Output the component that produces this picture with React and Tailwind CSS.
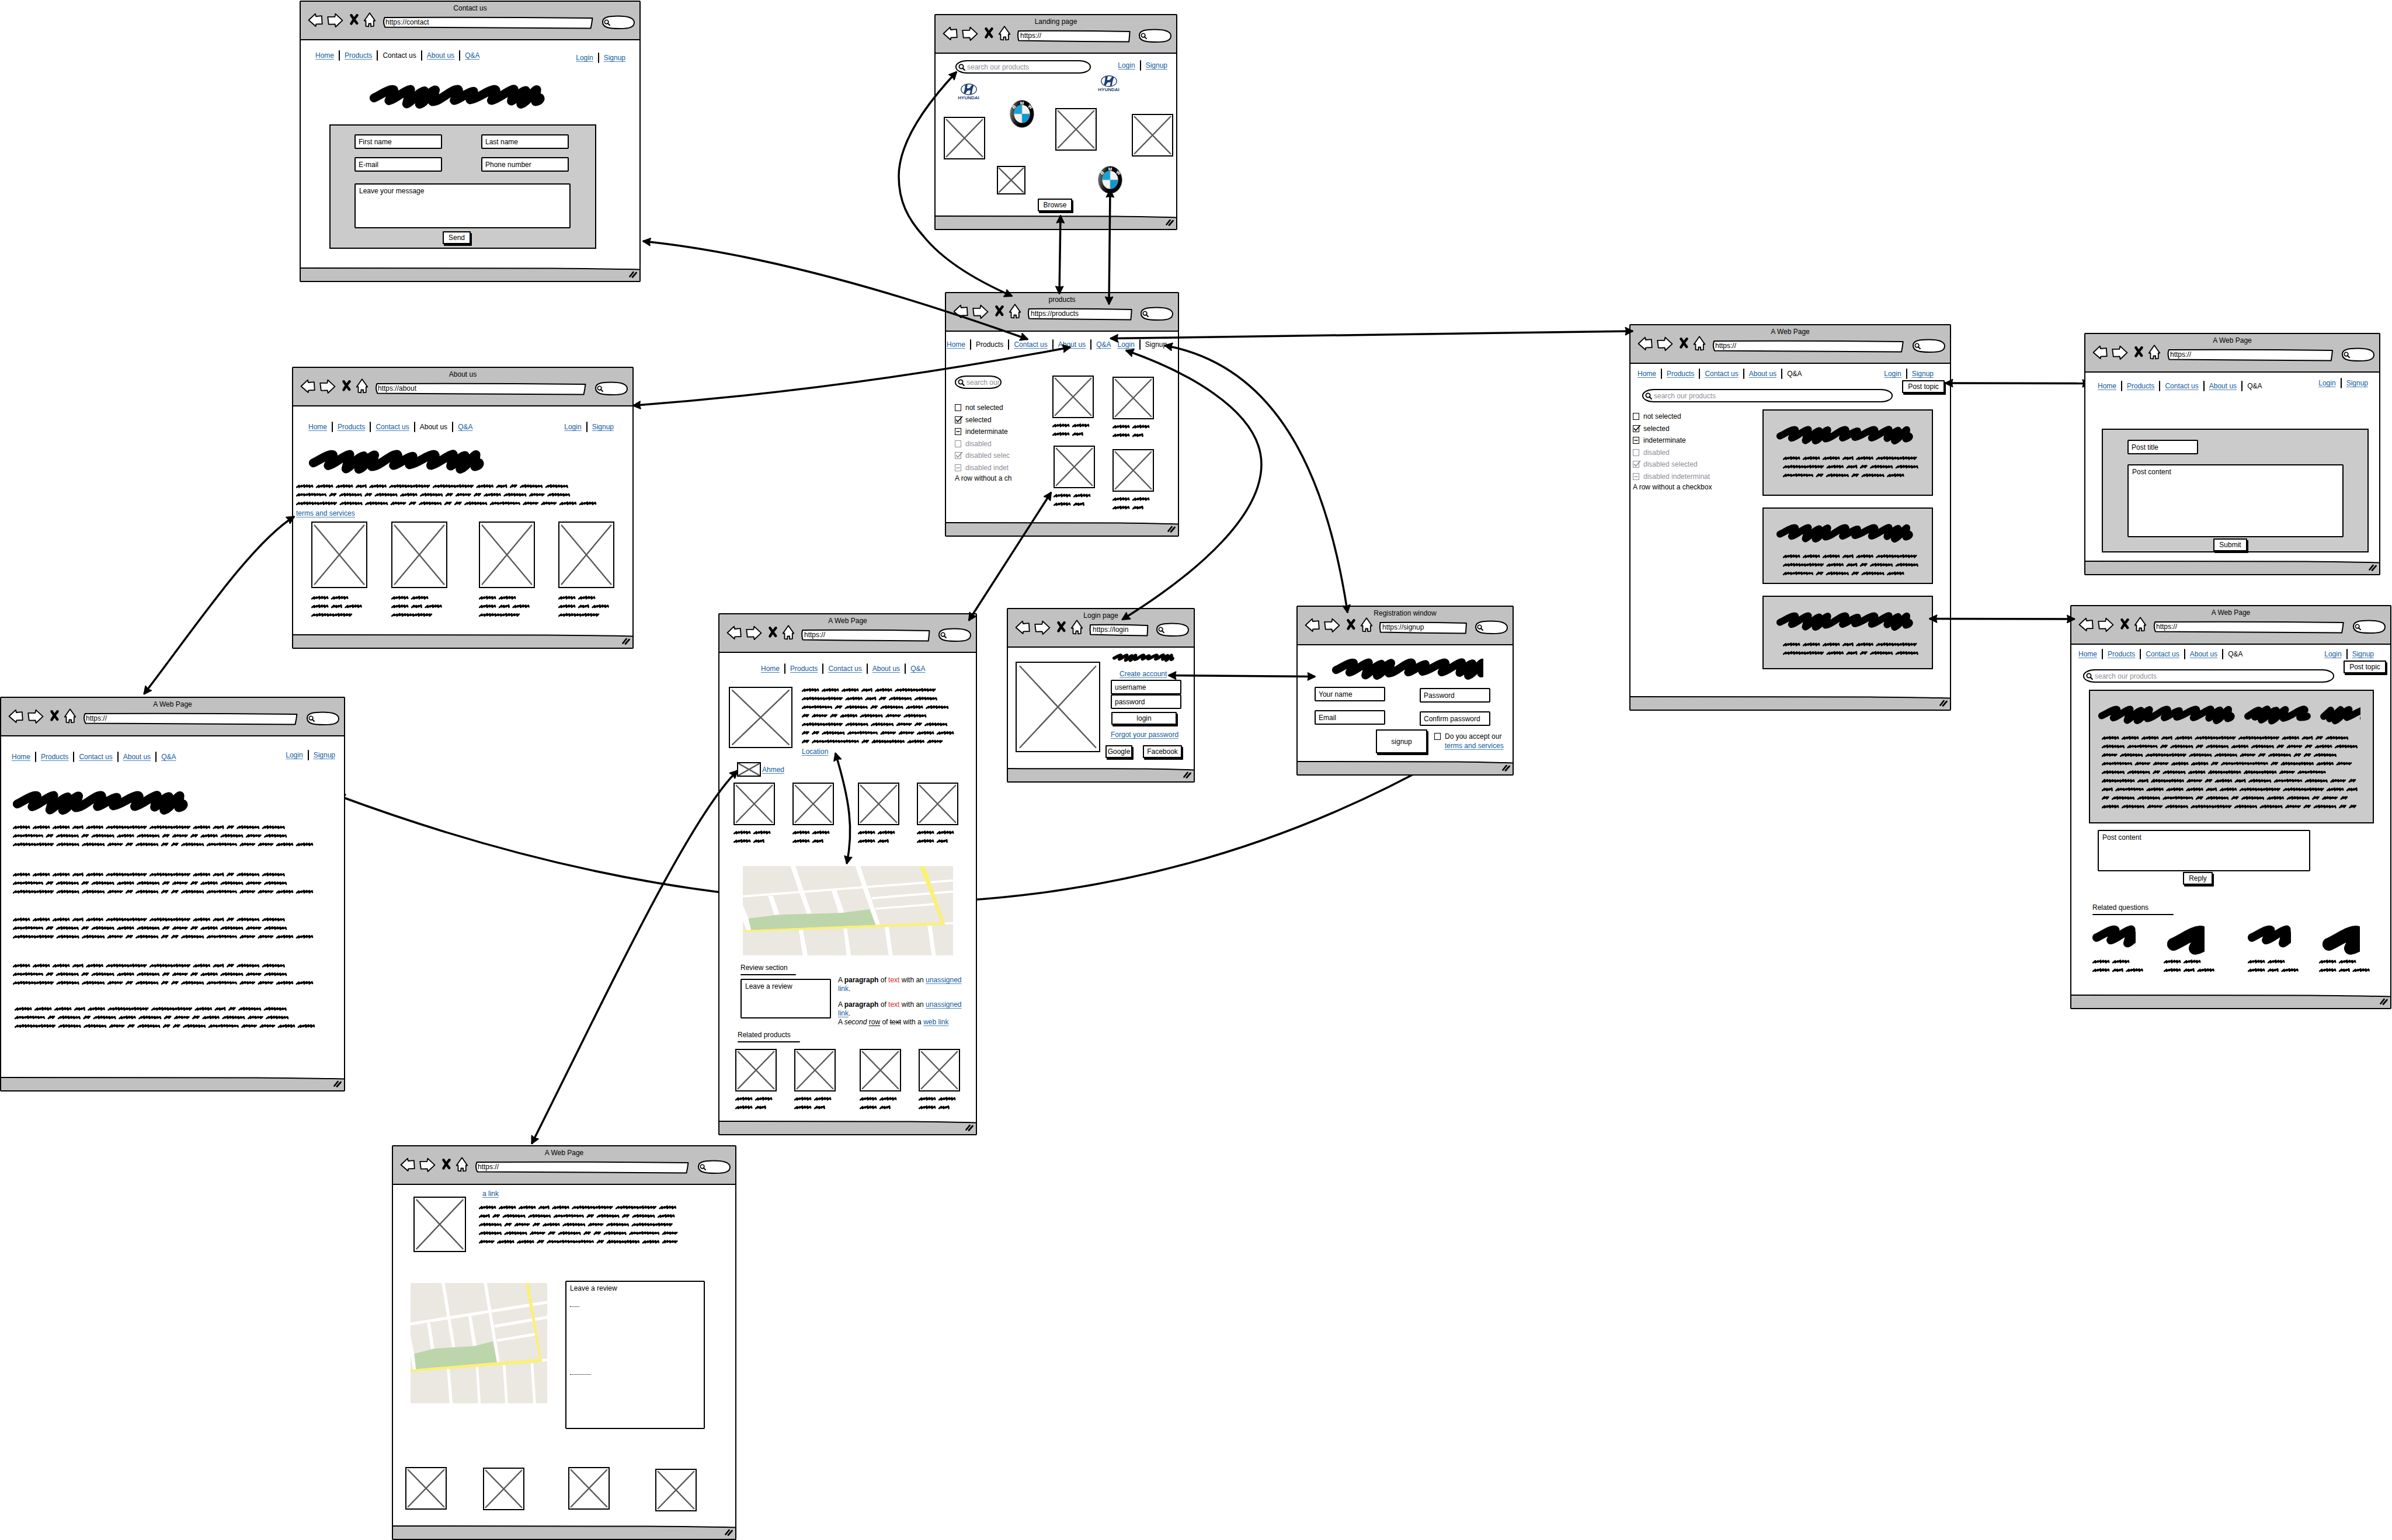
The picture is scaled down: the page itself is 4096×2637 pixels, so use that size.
import React from "react";

/* ---------- sketch drawing helpers ---------- */

const WORD_WIDTH = { 2: 12.6, 3: 18.8, 4: 26.6, 5: 29.4, 7: 39, 8: 48.4, 9: 56.4, T: 52, C: 70, R: 80.6 };
const WORD_GAP = 4.6;
const LINE = 14.7;

function wordPath(kind, x0, yc) {
  const w = WORD_WIDTH[kind];
  const steps = Math.round(w / 2.4);
  const seed = kind.charCodeAt(0);
  let d = "M" + (x0 + 1.2).toFixed(1) + " " + (yc + 2).toFixed(1);
  for (let i = 1; i <= steps; i++) {
    const x = x0 + 1.2 + ((w - 2.4) * i) / steps;
    const r = ((seed * 31 + i * 17) % 7) / 7;
    const y = i % 2 ? yc - 0.9 - r * 1.1 : yc + 0.8 + (((seed + i * 5) % 4) / 4) * 1.5;
    const shift = i === steps ? 0 : i % 2 ? 1.5 : -0.8;
    d += "L" + (x + shift).toFixed(1) + " " + y.toFixed(1);
  }
  return d;
}

function Scribble({ rows, className = "" }) {
  let d = "";
  let width = 0;
  rows.forEach((row, r) => {
    let x = 0;
    row.split(" ").forEach((k) => {
      d += wordPath(k, x, r * LINE + LINE / 2);
      x += WORD_WIDTH[k] + WORD_GAP;
    });
    width = Math.max(width, x);
  });
  return (
    <svg
      aria-hidden="true"
      width={Math.ceil(width)}
      height={Math.ceil(rows.length * LINE)}
      className={"block shrink-0 " + className}
    >
      <path d={d} fill="none" stroke="#000" strokeWidth="2.7" strokeLinejoin="round" strokeLinecap="round" />
    </svg>
  );
}

const HEADING_LONG =
  "M7.5 22.6C18 18 30 9 38 8.4C44 7.8 41 11 38 17L33 27.3C45 25 58 10 70 8.2L63.4 32.8C72 30 82 13 94 10.7L85.3 33.4C98 30 100 12 112.5 9L107.6 29C122 28 138 9 150 8.2C156 8 149 18 144.8 27C155 25 168 12 178 11.3L172 25.8C188 23 202 9 214 8.2C220 9 212 18 208.6 27C222 24 236 10 247 7.8L242.7 28C252 24 257 12 267.3 10L259 33.4C272 29 276 14 286 8.5L284 29C290 28 293 25 291.6 22.6";
const HEADING_MID =
  "M5.9 18.6C12 15 20 8 25 7.8L18 20C26 18 34 7 39.5 6.2L29 25C40 20 46 9 55 8.2L46.7 26.6C58 22 64 8 70.5 6.8L66.7 22C80 20 92 7 102 6.2C108 7 98 14 95 20.5C101 21 106 20 108 18.3";
const HEADING_CUT = "M6 18.8L18 8L16 22.8L35 7L25.5 26.4C36 22 42 8 49.5 6.8L45.6 20.5C54 18 66 9 78 6L74 22";

function Blob({ viewBox, d = HEADING_LONG, stroke = "15.2", className = "" }) {
  return (
    <svg aria-hidden="true" viewBox={viewBox} preserveAspectRatio="xMinYMin meet" className={"block shrink-0 " + className}>
      <path d={d} fill="none" stroke="#000" strokeWidth={stroke} strokeLinejoin="round" strokeLinecap="round" />
    </svg>
  );
}

function Picture({ className = "" }) {
  return (
    <svg aria-hidden="true" viewBox="0 0 100 100" preserveAspectRatio="none" className={"block shrink-0 border-2 border-black bg-white " + className}>
      <g stroke="#595959" strokeWidth="2.4" strokeLinecap="round">
        <line x1="4" y1="4" x2="96" y2="96" vectorEffect="non-scaling-stroke" />
        <line x1="96" y1="4" x2="4" y2="96" vectorEffect="non-scaling-stroke" />
      </g>
    </svg>
  );
}

function StreetMap({ className = "" }) {
  return (
    <svg aria-hidden="true" viewBox="0 0 1161 492" preserveAspectRatio="none" className={"block shrink-0 bg-[#ebe8e1] " + className}>
      <g fill="#fff">
        <path d="M263 0H291L379 262H353Z" />
        <path d="M621 0H649L758 324H733Z" />
        <path d="M0 161L1161 73V85L0 173Z" />
        <path d="M711 171L1161 134V146L714 183Z" />
        <path d="M731 230L1080 202V214L735 240Z" />
        <path d="M139 163H167L203 269H173Z" />
        <path d="M489 134H517L561 257H529Z" />
        <path d="M0 214L31 289L46 352L22 356L0 298Z" />
        <path d="M1110 311L1161 309V320L1110 322Z" />
        <path d="M309 350H332L358 492H331Z" />
        <path d="M556 343H575L597 492H573Z" />
        <path d="M783 335H806L828 492H805Z" />
        <path d="M1020 328H1043L1066 492H1043Z" />
      </g>
      <path fill="#bdd5ab" d="M31 289L201 268L541 258L701 238L734 324L46 352Z" />
      <path fill="#fbf076" d="M0 354L1095 309L976 0H1006L1118 323L0 363Z" />
    </svg>
  );
}

function Magnifier({ className = "" }) {
  return (
    <svg aria-hidden="true" viewBox="0 0 12 12" className={"pointer-events-none " + className}>
      <circle cx="5" cy="5" r="3.6" fill="none" stroke="#000" strokeWidth="1.8" />
      <path d="M7.6 7.8L10.8 11" stroke="#000" strokeWidth="2.2" strokeLinecap="round" />
    </svg>
  );
}

/* ---------- browser frame ---------- */

function ToolButton({ label, viewBox, className, children }) {
  return (
    <button type="button" aria-label={label} className="flex h-[26px] items-center">
      <svg viewBox={viewBox} className={className} fill="#fff" stroke="#000" strokeWidth="6" strokeLinejoin="round" strokeLinecap="round">
        {children}
      </svg>
    </button>
  );
}

function Browser({ title, url = "https://", className = "", children }) {
  return (
    <section className={"absolute flex flex-col rounded-[2px] border-2 border-black bg-white " + className}>
      <header className="h-[66px] border-b-2 border-black bg-[#c1c1c1] pt-[3px]">
        <h2 className="h-[15px] text-center text-xs">{title}</h2>
        <div className="flex items-start pr-2 pl-3">
          <ToolButton label="Back" viewBox="76 91 84 80" className="h-[25px] w-[26px]">
            <path d="M81 131L118 96L121 110L153 107L156 152L122 153L120 165Z" />
          </ToolButton>
          <span className="w-[7px]" />
          <ToolButton label="Forward" viewBox="184 91 90 80" className="h-[25px] w-[28px]">
            <path d="M188 113L227 113L230 96L269 132L231 168L228 153L193 154Z" />
          </ToolButton>
          <span className="w-[10px]" />
          <ToolButton label="Stop" viewBox="306 98 54 64" className="h-[20px] w-[17px]">
            <path d="M317 105Q332 128 348 149M349 105Q330 126 317 151" fill="none" strokeWidth="14" />
          </ToolButton>
          <span className="w-[7px]" />
          <ToolButton label="Home page" viewBox="382 90 70 84" className="h-[26px] w-[22px]">
            <path d="M417 94L447 137L439 137L439 167L424 169L424 153L412 153L411 169L396 167L396 137L387 137Z" />
          </ToolButton>
          <div className="relative mt-2 ml-[11px] h-5 min-w-0 flex-1">
            <svg aria-hidden="true" viewBox="0 0 100 20" preserveAspectRatio="none" className="absolute inset-0 h-full w-full overflow-visible">
              <path
                d="M1 1Q50 0 99.3 2Q99 12 98.5 19.5Q50 19 1.2 17.5Q0 9 1 1Z"
                fill="#fff"
                stroke="#000"
                strokeWidth="2"
                strokeLinejoin="round"
                vectorEffect="non-scaling-stroke"
              />
            </svg>
            <input aria-label={title + " address"} defaultValue={url} className="relative block h-[18px] w-full bg-transparent pl-[5px] text-xs outline-none" />
          </div>
          <div className="relative mt-[6px] ml-[14px] h-[22px] w-[56px]">
            <svg aria-hidden="true" viewBox="0 0 56 22" className="absolute inset-0 h-full w-full overflow-visible">
              <path
                d="M1 10C1.5 2 12 0.5 27 0.5C45 0.5 54.5 3.5 55 11C55.3 20 46 22 30 22C11 22 0.5 20 1 10Z"
                fill="#fff"
                stroke="#000"
                strokeWidth="2"
              />
            </svg>
            <Magnifier className="absolute top-[6px] left-[3px] h-[11px] w-[11px]" />
            <input aria-label={title + " search"} className="relative block h-full w-full bg-transparent pl-4 text-xs outline-none" />
          </div>
        </div>
      </header>
      <div className="min-h-0 flex-1">{children}</div>
      <footer className="relative flex h-[23px] items-center justify-end pr-1">
        <svg aria-hidden="true" viewBox="0 0 100 23" preserveAspectRatio="none" className="absolute inset-0 h-full w-full">
          <path d="M-1 1C30 2 55 0.5 75 1.5S95 3 101 3.5V25H-1Z" fill="#c1c1c1" stroke="#000" strokeWidth="2" vectorEffect="non-scaling-stroke" />
        </svg>
        <svg aria-hidden="true" viewBox="0 0 14 12" className="relative h-3 w-[14px]">
          <path d="M1.5 9.5L7.5 2M6 10.5L12.5 3" stroke="#000" strokeWidth="2.8" strokeLinecap="round" />
        </svg>
      </footer>
    </section>
  );
}

/* ---------- controls ---------- */

function Link({ children, className = "" }) {
  return (
    <a href="#" className={"text-[#125a9c] underline decoration-[#4a86bd] decoration-1 underline-offset-2 " + className}>
      {children}
    </a>
  );
}

function LinkBar({ items, current, className = "" }) {
  return (
    <nav className={"flex h-[18px] shrink-0 items-center text-xs whitespace-nowrap " + className}>
      {items.map((item, i) => (
        <React.Fragment key={item}>
          {i > 0 && <span className="mx-2 h-[18px] w-[2px] rounded-full bg-black" />}
          {item === current ? <span>{item}</span> : <Link>{item}</Link>}
        </React.Fragment>
      ))}
    </nav>
  );
}

const MAIN = ["Home", "Products", "Contact us", "About us", "Q&A"];
const USER = ["Login", "Signup"];

function TextBox({ label, type = "text", className = "" }) {
  return (
    <input
      type={type}
      aria-label={label}
      placeholder={label}
      className={"block h-[25px] shrink-0 rounded-[2px] border-2 border-black bg-white pl-[5px] text-xs outline-none placeholder:text-black placeholder:opacity-100 " + className}
    />
  );
}

function TextArea({ label, className = "" }) {
  return (
    <textarea
      aria-label={label}
      placeholder={label}
      className={"block shrink-0 resize-none rounded-[2px] border-2 border-black bg-white px-[6px] pt-[3px] text-xs outline-none placeholder:text-black placeholder:opacity-100 " + className}
    />
  );
}

function PushButton({ children, className = "" }) {
  return (
    <button
      type="button"
      className={"block h-[22px] shrink-0 rounded-[1px] border-2 border-black bg-white text-center text-xs whitespace-nowrap shadow-[2px_3px_0_#000] " + className}
    >
      {children}
    </button>
  );
}

function SearchBox({ text = "search our products", className = "" }) {
  return (
    <div className={"relative shrink-0 " + className}>
      <input
        type="text"
        aria-label={text}
        placeholder={text}
        className="block h-[23px] w-full rounded-[20px/11px] border-2 border-black bg-white pl-[18px] text-xs outline-none placeholder:text-[#8e8e98] placeholder:opacity-100"
      />
      <Magnifier className="absolute top-[6px] left-[5px] h-3 w-3" />
    </div>
  );
}

function Tick({ label, state, disabled = false }) {
  const ink = disabled ? "#8e8e98" : "#000";
  return (
    <label className={"flex items-center gap-[7px] " + (disabled ? "text-[#8e8e98]" : "text-black")}>
      <span className="relative block h-3 w-[11px] shrink-0">
        <input
          type="checkbox"
          disabled={disabled}
          defaultChecked={state === "on"}
          className={"block h-3 w-[11px] appearance-none border " + (disabled ? "border-[#8e8e98]" : "border-black")}
        />
        <svg aria-hidden="true" viewBox="0 0 11 12" className="pointer-events-none absolute inset-0 h-full w-full overflow-visible" fill="none" stroke={ink}>
          {state === "on" && <path d="M2 5.5L5 9L13 0" strokeWidth="1.7" />}
          {state === "mixed" && <path d="M2.5 6H8.5" strokeWidth="1.4" />}
        </svg>
      </span>
      {label}
    </label>
  );
}

function TickList({ labels, className = "" }) {
  return (
    <div className={"overflow-hidden text-xs whitespace-nowrap " + className}>
      <div className="grid h-[123px] grid-rows-6">
        <Tick label="not selected" />
        <Tick label="selected" state="on" />
        <Tick label="indeterminate" state="mixed" />
        <Tick label="disabled" disabled />
        <Tick label={labels[0]} state="on" disabled />
        <Tick label={labels[1]} state="mixed" disabled />
      </div>
      <p>{labels[2]}</p>
    </div>
  );
}

function ProductCard({ rows = ["5 5", "5 3"], className = "" }) {
  return (
    <div className={"w-[71px] shrink-0 " + className}>
      <Picture className="h-[73px] w-[71px]" />
      <Scribble rows={rows} className="mt-[5px]" />
    </div>
  );
}

function Hyundai({ className = "" }) {
  return (
    <div className={"flex h-[30px] w-[37px] flex-col items-center text-[#1f3f74] " + className}>
      <svg aria-hidden="true" viewBox="0 0 28 20" className="h-5 w-7 shrink-0">
        <ellipse cx="14" cy="10" rx="13.2" ry="9.2" fill="none" stroke="#1f3f74" strokeWidth="1.4" />
        <path d="M7.5 2.8L12 1.2C11.5 4 11 6.5 10.8 8C14 8.5 16 7.5 17 5.5L19.5 2L22.5 3.500C20.5 8 19.5 13 19 17.5L15.5 19C16 16 16.5 13.5 17 12C13.5 11.5 11.5 12 10.5 14L8 18L5 16.5C7 12 7.5 7 7.5 2.8Z" fill="#1f3f74" />
      </svg>
      <span className="text-[8px] leading-[10px] font-bold">HYUNDAI</span>
    </div>
  );
}

function Bmw({ id, className = "" }) {
  return (
    <svg aria-label="BMW" role="img" viewBox="0 0 42 48" className={"block h-12 w-[42px] shrink-0 " + className}>
      <defs>
        <linearGradient id={id} x1="0" y1="0.3" x2="1" y2="0.5">
          <stop offset="0" stopColor="#777" />
          <stop offset="0.3" stopColor="#222" />
          <stop offset="0.5" stopColor="#000" />
        </linearGradient>
      </defs>
      <ellipse cx="21" cy="24" rx="20.5" ry="23.5" fill={"url(#" + id + ")"} stroke="#8fa7b3" strokeWidth="0.8" />
      <ellipse cx="21" cy="24" rx="13.6" ry="15.4" fill="#f2f2f2" />
      <path d="M21 24H7.4A13.6 15.4 0 0 1 21 8.6Z" fill="#12a5dc" />
      <path d="M21 24H34.6A13.6 15.4 0 0 1 21 39.4Z" fill="#0d97d0" />
      <path d="M7.4 24H34.6M21 8.6V39.4" stroke="#9aa" strokeWidth="0.7" />
      <g fill="#fff" fontFamily="Liberation Sans, sans-serif" fontSize="8" fontWeight="700" textAnchor="middle">
        <text x="21" y="8">M</text>
        <text transform="translate(9 14) rotate(-38)">B</text>
        <text transform="translate(33.5 14) rotate(38)">W</text>
      </g>
    </svg>
  );
}

function SectionTitle({ children, rule, className = "" }) {
  return (
    <div className={className}>
      <h3 className="h-[19px] text-xs">{children}</h3>
      <div className={"h-[2px] rounded-full bg-black " + rule} />
    </div>
  );
}

/* ---------- screens ---------- */

const LOREM_3 = ["5 5 5 3 5 C C 5 3 2 7 7", "T 2 7 2 7 5 7 2 4 2 5 7 4 7", "C 7 7 4 2 7 2 2 7 T 4 4 5 5"];
const CARD_LOREM = ["5 5 5 3 5 C", "C 5 3 2 7 7", "T 2 7 2 7 5"];

function ContactPage() {
  return (
    <Browser title="Contact us" url="https://contact" className="top-[1px] left-[513px] min-h-[482px] w-[584px]">
      <div className="flex items-start justify-between pt-[17px] pr-6 pl-[25px]">
        <LinkBar items={MAIN} current="Contact us" />
        <LinkBar items={USER} className="mt-1" />
      </div>
      <Blob viewBox="0 0 300 42" className="mt-[37px] ml-[118px] h-[42px] w-[300px]" />
      <form className="mt-[26px] ml-[49px] w-[457px] border-2 border-black bg-[#cbcbcb] pt-[15px] pb-[6px] pl-[41px]">
        <div className="grid grid-cols-[150px_150px] gap-x-[67px] gap-y-[14px]">
          <TextBox label="First name" />
          <TextBox label="Last name" />
          <TextBox label="E-mail" type="email" />
          <TextBox label="Phone number" type="tel" />
        </div>
        <TextArea label="Leave your message" className="mt-[20px] h-[77px] w-[370px]" />
        <PushButton className="mt-[5px] ml-[151px] w-[48px]">Send</PushButton>
      </form>
    </Browser>
  );
}

function LandingPage() {
  return (
    <Browser title="Landing page" className="top-[24px] left-[1600px] min-h-[370px] w-[416px]">
      <div className="flex items-start justify-between pt-[11px] pr-[15px] pl-[34px]">
        <SearchBox className="w-[232px]" />
        <LinkBar items={USER} />
      </div>
      <div className="flex items-start pl-[14px]">
        <div className="flex w-[71px] flex-col">
          <Hyundai className="mt-[17px] mr-[10px] self-end" />
          <Picture className="mt-[27px] h-[73px] w-[71px]" />
        </div>
        <div className="ml-5 flex w-16 flex-col">
          <Bmw id="ring-a" className="mt-[45px] self-end" />
          <Picture className="mt-[65px] h-[49px] w-[49px]" />
        </div>
        <div className="ml-[6px] flex w-[101px] flex-col">
          <Picture className="mt-[59px] h-[73px] w-[71px] self-end" />
          <PushButton className="mt-[82px] w-[59px]">Browse</PushButton>
        </div>
        <div className="ml-[2px] flex w-[42px] flex-col">
          <Hyundai className="mt-[3px]" />
          <Bmw id="ring-b" className="mt-[125px]" />
        </div>
        <Picture className="mt-[69px] ml-4 h-[73px] w-[71px]" />
      </div>
    </Browser>
  );
}

function ProductsPage() {
  return (
    <Browser title="products" url="https://products" className="top-[500px] left-[1618px] min-h-[419px] w-[401px]">
      <div className="flex items-start gap-[11px] pt-[13px] pl-[1px]">
        <LinkBar items={MAIN} current="Products" />
        <LinkBar items={USER} current="Signup" />
      </div>
      <div className="mt-[44px] flex items-start pl-[15px]">
        <div className="w-[99px]">
          <SearchBox text="search our" className="w-20" />
          <TickList labels={["disabled selec", "disabled indet", "A row without a ch"]} className="mt-[22px]" />
        </div>
        <div className="ml-[68px]">
          <ProductCard />
          <ProductCard className="mt-[12px] ml-[2px]" />
        </div>
        <div className="mt-[2px] ml-[30px]">
          <ProductCard />
          <ProductCard className="mt-[16px]" />
        </div>
      </div>
    </Browser>
  );
}

function AboutPage() {
  const team = ["", "ml-[41px]", "ml-[54px]", "ml-[40px]"];
  return (
    <Browser title="About us" url="https://about" className="top-[628px] left-[500px] min-h-[483px] w-[585px]">
      <div className="flex items-start justify-between pt-[26px] pr-8 pl-[26px]">
        <LinkBar items={MAIN} current="About us" />
        <LinkBar items={USER} />
      </div>
      <Blob viewBox="0 0 300 42" className="mt-[30px] ml-[27px] h-[42px] w-[300px]" />
      <Scribble rows={LOREM_3} className="mt-[13px] ml-[5px]" />
      <p className="mt-px ml-[5px] text-xs">
        <Link>terms and services</Link>
      </p>
      <div className="mt-[6px] flex items-start pl-[31px]">
        {team.map((gap, i) => (
          <div key={i} className={"w-24 " + gap}>
            <Picture className="h-[114px] w-24" />
            <Scribble rows={["5 5", "5 3 5", "C"]} className="mt-[9px]" />
          </div>
        ))}
      </div>
    </Browser>
  );
}

function TermsPage() {
  const paragraphs = ["mt-[13px] ml-[20px]", "mt-[36px] ml-[20px]", "mt-[32px] ml-[20px]", "mt-[34px] ml-[20px]", "mt-[29px] ml-[23px]"];
  return (
    <Browser title="A Web Page" className="top-[1193px] left-0 min-h-[676px] w-[591px]">
      <div className="flex items-start justify-between pt-[23px] pr-[15px] pl-[18px]">
        <LinkBar items={MAIN} className="mt-[3px]" />
        <LinkBar items={USER} />
      </div>
      <Blob viewBox="0 0 300 42" className="mt-[49px] ml-[20px] h-[42px] w-[300px]" />
      {paragraphs.map((place) => (
        <Scribble key={place} rows={LOREM_3} className={place} />
      ))}
    </Browser>
  );
}

function ProductPage() {
  const gaps = ["", "ml-[30px]", "ml-[41px]", "ml-[30px]"];
  return (
    <Browser title="A Web Page" className="top-[1050px] left-[1230px] min-h-[894px] w-[443px]">
      <LinkBar items={MAIN} className="mt-[18px] ml-[71px]" />
      <div className="mt-5 flex items-start pl-4">
        <Picture className="mt-[2px] h-[105px] w-[109px]" />
        <div className="ml-4">
          <Scribble
            rows={["5 5 5 3 5 C", "C 5 3 2 7 7", "T 2 7 2 7 5 7", "2 4 2 5 7 4 7", "C 7 7 4 2 7", "2 2 7 T 4 4 5 5", "2 R 2 9 5 4"]}
          />
          <p className="mt-[2px] text-xs">
            <Link>Location</Link>
          </p>
        </div>
      </div>
      <div className="mt-[10px] flex h-[25px] items-center gap-[2px] pl-[30px] text-xs">
        <Picture className="h-[25px] w-[41px]" />
        <Link>Ahmed</Link>
      </div>
      <div className="mt-[10px] flex pl-[24px]">
        {gaps.map((gap, i) => (
          <ProductCard key={i} className={gap} />
        ))}
      </div>
      <StreetMap className="mt-[35px] ml-[40px] h-[153px] w-[360px]" />
      <div className="mt-[13px] flex items-start pl-[36px]">
        <div>
          <SectionTitle rule="w-[95px]">Review section</SectionTitle>
          <TextArea label="Leave a review" className="mt-[6px] h-[68px] w-[155px]" />
        </div>
        <div className="mt-[22px] ml-3 w-[222px] text-[12px] leading-[15px]">
          <p>
            A <b>paragraph</b> of <span className="text-[#d9292f]">text</span> with an <Link>unassigned </Link>
            <br />
            <a href="#" className="text-[#125a9c]">
              link
            </a>
            .
          </p>
          <p className="mt-[12px]">
            A <b>paragraph</b> of <span className="text-[#d9292f]">text</span> with an <Link>unassigned </Link>
            <br />
            <Link>link</Link>.
          </p>
          <p>
            A <i className="italic">second</i> <u className="underline-offset-2">row</u> of <s>text</s> with a <Link>web link</Link>
          </p>
        </div>
      </div>
      <SectionTitle rule="w-[107px]" className="mt-[6px] ml-[31px]">
        Related products
      </SectionTitle>
      <div className="mt-[11px] flex pl-[27px]">
        {gaps.map((gap, i) => (
          <ProductCard key={i} className={gap} />
        ))}
      </div>
    </Browser>
  );
}

function LoginPage() {
  return (
    <Browser title="Login page" url="https://login" className="top-[1041px] left-[1724px] min-h-[299px] w-[322px]">
      <div className="flex items-start pt-[10px] pl-[13px]">
        <Picture className="mt-[14px] h-[155px] w-[145px]" />
        <div className="ml-2">
          <Blob viewBox="0 0 300 42" className="ml-[13px] h-[15px] w-[106px]" />
          <p className="mt-[12px] ml-[25px] text-xs">
            <Link>Create account</Link>
          </p>
          <TextBox label="username" className="mt-[2px] ml-[10px] w-[121px]" />
          <TextBox label="password" type="password" className="ml-[10px] w-[121px]" />
          <PushButton className="mt-[5px] ml-[11px] w-[112px]">login</PushButton>
          <p className="mt-[9px] ml-[10px] text-xs whitespace-nowrap">
            <Link>Forgot your password</Link>
          </p>
          <div className="mt-[10px] ml-px flex gap-[18px]">
            <PushButton className="w-[46px]">Google</PushButton>
            <PushButton className="w-[67px]">Facebook</PushButton>
          </div>
        </div>
      </div>
    </Browser>
  );
}

function RegistrationPage() {
  return (
    <Browser title="Registration window" url="https://signup" className="top-[1037px] left-[2220px] min-h-[291px] w-[372px]">
      <Blob viewBox="0 0 288 42" className="mt-[22px] ml-[59px] h-[38px] w-[259px]" />
      <div className="mt-[11px] flex items-start pl-[29px]">
        <div>
          <TextBox label="Your name" className="w-[121px]" />
          <TextBox label="Email" type="email" className="mt-[15px] w-[121px]" />
        </div>
        <div className="mt-[2px] ml-[59px]">
          <TextBox label="Password" type="password" className="w-[121px]" />
          <TextBox label="Confirm password" type="password" className="mt-[15px] w-[121px]" />
        </div>
      </div>
      <div className="mt-[6px] flex items-start pl-[134px]">
        <PushButton className="h-[41px] w-[88px]">signup</PushButton>
        <div className="mt-[4px] ml-3 text-xs whitespace-nowrap">
          <Tick label="Do you accept our" />
          <p className="ml-[18px]">
            <Link>terms and services</Link>
          </p>
        </div>
      </div>
    </Browser>
  );
}

function QaPage() {
  return (
    <Browser title="A Web Page" className="top-[555px] left-[2790px] min-h-[662px] w-[551px]">
      <div className="flex items-start justify-between pt-[8px] pr-7 pl-3">
        <LinkBar items={MAIN} current="Q&A" />
        <LinkBar items={USER} />
      </div>
      <div className="flex items-start pt-[2px] pl-[20px]">
        <SearchBox className="mt-[15px] w-[429px]" />
        <PushButton className="ml-4 w-[73px]">Post topic</PushButton>
      </div>
      <div className="mt-3 flex items-start pl-1">
        <TickList labels={["disabled selected", "disabled indeterminat", "A row without a checkbox"]} className="mt-[2px] w-[137px]" />
        <div className="ml-[85px] flex w-[292px] flex-col gap-5">
          <article className="min-h-[148px] border-2 border-black bg-[#cbcbcb] pt-[26px]">
            <Blob viewBox="0 0 300 42" className="ml-[22px] h-[33px] w-[234px]" />
            <Scribble rows={CARD_LOREM} className="mt-[15px] ml-[33px]" />
          </article>
          <article className="min-h-[131px] border-2 border-black bg-[#cbcbcb] pt-[26px]">
            <Blob viewBox="0 0 300 42" className="ml-[22px] h-[33px] w-[234px]" />
            <Scribble rows={CARD_LOREM} className="mt-[15px] ml-[33px]" />
          </article>
          <article className="min-h-[126px] border-2 border-black bg-[#cbcbcb] pt-[26px]">
            <Blob viewBox="0 0 300 42" className="ml-[22px] h-[33px] w-[234px]" />
            <Scribble rows={CARD_LOREM.slice(0, 2)} className="mt-[15px] ml-[33px]" />
          </article>
        </div>
      </div>
    </Browser>
  );
}

function PostPage() {
  return (
    <Browser title="A Web Page" className="top-[570px] left-[3569px] min-h-[415px] w-[507px]">
      <div className="flex items-start justify-between pt-[9px] pr-[19px] pl-[21px]">
        <LinkBar items={MAIN} current="Q&A" className="mt-[5px]" />
        <LinkBar items={USER} />
      </div>
      <form className="mt-[64px] ml-[28px] min-h-[212px] w-[457px] border-2 border-black bg-[#cbcbcb] pt-[17px] pl-[42px]">
        <TextBox label="Post title" className="w-[121px]" />
        <TextArea label="Post content" className="mt-[17px] h-[125px] w-[370px]" />
        <PushButton className="mt-[2px] ml-[147px] w-[58px]">Submit</PushButton>
      </form>
    </Browser>
  );
}

function RelatedQuestion({ wide, className = "" }) {
  return (
    <div className={"w-[87px] shrink-0 " + className}>
      <div className="h-[55px]">
        {wide ? <Blob viewBox="0 0 44 35" className="ml-[6px] h-[51px] w-16" /> : <Blob viewBox="0 0 78 41" className="h-[39px] w-[74px]" />}
      </div>
      <Scribble rows={["5 5", "5 3 5"]} />
    </div>
  );
}

function ThreadPage() {
  return (
    <Browser title="A Web Page" className="top-[1036px] left-[3545px] min-h-[692px] w-[550px]">
      <div className="flex items-start justify-between pt-[7px] pr-7 pl-3">
        <LinkBar items={MAIN} current="Q&A" />
        <LinkBar items={USER} />
      </div>
      <div className="flex items-start pt-[2px] pl-[20px]">
        <SearchBox className="mt-[15px] w-[430px]" />
        <PushButton className="ml-4 w-[73px]">Post topic</PushButton>
      </div>
      <article className="mt-3 ml-[30px] h-[229px] w-[488px] border-2 border-black bg-[#cbcbcb] pt-[25px] pl-[14px]">
        <div className="flex">
          <Blob viewBox="0 0 300 42" className="h-[33px] w-[234px]" />
          <Blob viewBox="0 0 114 33" d={HEADING_MID} stroke="11.8" className="ml-4 h-[33px] w-[114px]" />
          <Blob viewBox="0 0 69 33" d={HEADING_CUT} stroke="11.8" className="ml-4 h-[33px] w-[69px]" />
        </div>
        <Scribble
          className="mt-[15px] ml-[6px]"
          rows={[
            "5 5 5 3 5 C C 5 3 2 7",
            "7 T 2 7 2 7 5 7 2 4 2 5 7",
            "4 7 C 7 7 4 2 7 2 2 7",
            "T 4 4 5 5 2 R 2 9 5 4",
            "7 7 2 7 5 9 9 4 8",
            "9 3 9 4 2 5 3 7 8 7 4 2",
            "3 8 5 5 5 3 5 C C 5 3",
            "2 7 7 T 2 7 2 7 5 7 2 4 2",
            "5 7 4 7 C 7 7 4 2 7 2 2",
          ]}
        />
      </article>
      <TextArea label="Post content" className="mt-[11px] ml-[45px] h-[71px] w-[364px]" />
      <PushButton className="mt-px ml-[191px] w-[51px]">Reply</PushButton>
      <SectionTitle rule="w-[139px]" className="mt-[31px] ml-[36px]">
        Related questions
      </SectionTitle>
      <div className="mt-[17px] flex pl-[36px]">
        <RelatedQuestion />
        <RelatedQuestion wide className="ml-[35px]" />
        <RelatedQuestion className="ml-[57px]" />
        <RelatedQuestion wide className="ml-[35px]" />
      </div>
    </Browser>
  );
}

function ProfilePage() {
  return (
    <Browser title="A Web Page" className="top-[1961px] left-[671px] min-h-[676px] w-[590px]">
      <div className="flex items-start pt-[7px] pl-[35px]">
        <Picture className="mt-[13px] h-[95px] w-[90px]" />
        <div className="ml-[22px]">
          <p className="ml-[6px] text-xs">
            <Link>a link</Link>
          </p>
          <Scribble
            className="mt-[8px]"
            rows={["5 5 5 3 5 C C 5", "3 2 7 7 T 2 7 2 7 5", "7 2 4 2 5 7 4 7 C", "7 7 4 2 7 2 2 7 T 4", "4 5 5 2 R 2 9 5 4"]}
          />
        </div>
      </div>
      <div className="mt-[49px] flex items-start pl-[30px]">
        <StreetMap className="mt-[4px] h-[206px] w-[234px]" />
        <div className="relative ml-[31px]">
          <TextArea label="Leave a review" className="h-[254px] w-[239px]" />
          <span className="absolute top-[44px] left-2 w-4 border-t border-dotted border-black" />
          <span className="absolute top-[160px] left-2 w-9 border-t border-dotted border-black" />
        </div>
      </div>
      <div className="mt-[65px] flex items-start pl-[21px]">
        <Picture className="h-[73px] w-[71px]" />
        <Picture className="mt-px ml-[62px] h-[73px] w-[71px]" />
        <Picture className="ml-[75px] h-[73px] w-[71px]" />
        <Picture className="mt-[3px] ml-[78px] h-[73px] w-[71px]" />
      </div>
    </Browser>
  );
}

/* ---------- connectors ---------- */

const BACK_ARROWS = ["M3331 656L3579 656.5", "M578 1362Q1649 1759 2468 1300"];

const FRONT_ARROWS = [
  "M1101 413Q1366 440 1760 581",
  "M1084 694.5Q1450 667 1833 594.5",
  "M1638 123C1575 190 1539 250 1539 302C1539 345 1555 375 1581 404C1610 440 1660 475 1733 507",
  "M1816 369L1814 503",
  "M1901 325L1899 521",
  "M1901.5 579.5L2796 567",
  "M1928 600C2020 632 2160 700 2160 795C2160 880 2060 975 1921.5 1061",
  "M1994.5 591.5C2180 625 2270 800 2307.5 1049",
  "M1800 843L1659 1062.5",
  "M3304 1059.5L3552.5 1060",
  "M504 884.5C430 930 330 1080 246.5 1188.5",
  "M1263 1319.5C1180 1400 1040 1700 910.5 1958.5",
  "M1430.5 1289.5C1455 1370 1462 1420 1450 1479",
  "M2001 1156.5L2252 1158.5",
];

function Connectors({ id, paths }) {
  return (
    <svg aria-hidden="true" className="pointer-events-none absolute inset-0 h-full w-full">
      <defs>
        <marker id={id} markerUnits="userSpaceOnUse" markerWidth="18" markerHeight="18" refX="15" refY="9" orient="auto-start-reverse">
          <path d="M15 9L2.5 2.8Q5 9 2.5 15.2Z" fill="#000" stroke="#000" strokeWidth="2" strokeLinejoin="round" />
        </marker>
      </defs>
      {paths.map((d) => (
        <path key={d} d={d} fill="none" stroke="#000" strokeWidth="3.5" markerStart={"url(#" + id + ")"} markerEnd={"url(#" + id + ")"} />
      ))}
    </svg>
  );
}

export default function App() {
  return (
    <main className="relative min-h-screen w-full overflow-hidden bg-white font-['Liberation_Sans',Arial,sans-serif] text-black">
      <QaPage />
      <Connectors id="tip-back" paths={BACK_ARROWS} />
      <ContactPage />
      <LandingPage />
      <ProductsPage />
      <AboutPage />
      <TermsPage />
      <ProductPage />
      <LoginPage />
      <RegistrationPage />
      <PostPage />
      <ThreadPage />
      <ProfilePage />
      <Connectors id="tip-front" paths={FRONT_ARROWS} />
    </main>
  );
}
